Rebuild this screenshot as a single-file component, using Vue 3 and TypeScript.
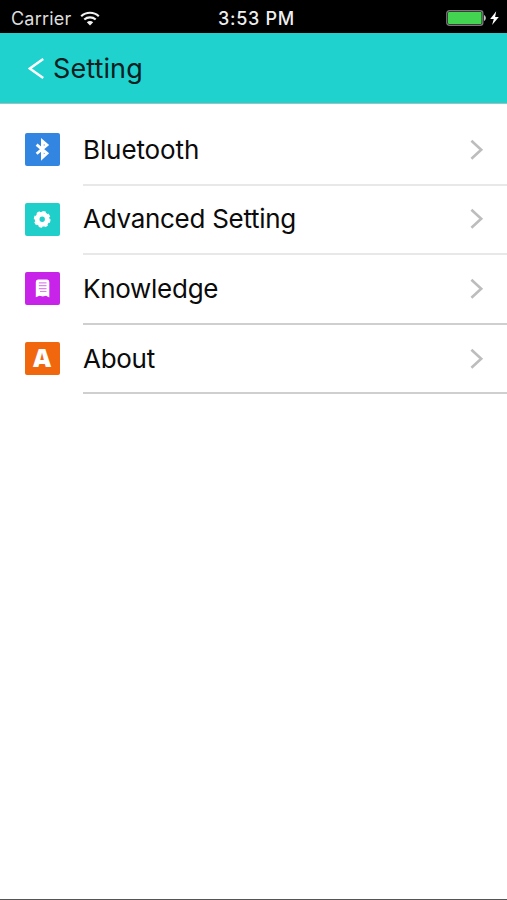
<script setup lang="ts">
type IconName = 'bluetooth' | 'gear' | 'book' | 'letter'

interface SettingItem {
  label: string
  icon: IconName
}

const items: SettingItem[] = [
  { label: 'Bluetooth', icon: 'bluetooth' },
  { label: 'Advanced Setting', icon: 'gear' },
  { label: 'Knowledge', icon: 'book' },
  { label: 'About', icon: 'letter' },
]
</script>

<template>
  <div class="screen">
    <div class="status">
      <div class="status-left">
        <span class="carrier">Carrier</span>
        <svg class="wifi" width="20" height="15" viewBox="0 0 20 15">
          <path d="M1.2 5.2C6.2.6 13.8.6 18.8 5.2" />
          <path d="M4.3 8.5C7.6 5.6 12.4 5.6 15.7 8.5" />
          <path class="dot" d="M6.8 11.2C8.6 9.6 11.4 9.6 13.2 11.2L10 14.5Z" />
        </svg>
      </div>
      <span class="time">3:53 PM</span>
      <div class="status-right">
        <svg width="54" height="18" viewBox="0 0 54 18">
          <rect x="0.8" y="1.8" width="36" height="14.4" rx="2.5" fill="#000" stroke="#777" stroke-width="1.4" />
          <rect x="2" y="3" width="33.6" height="12" rx="1" fill="#43d551" />
          <path d="M38.1 6C40.3 6.7 40.3 11.3 38.1 12Z" fill="#ddd" />
          <path d="M50.2 2.2L44.2 10.1H47.8L46.1 16L52.8 7.9H49.1Z" fill="#fff" />
        </svg>
      </div>
    </div>

    <header class="nav">
      <svg class="back" width="18" height="24" viewBox="0 0 18 24">
        <path d="M15.2 3L1.8 12.5L15.2 22" />
      </svg>
      <h1 class="title">Setting</h1>
    </header>

    <ul class="list">
      <li v-for="item in items" :key="item.label" class="row">
        <span class="tile" :class="item.icon">
          <svg v-if="item.icon === 'bluetooth'" width="35" height="33" viewBox="0 0 35 33">
            <path class="line" d="M11.6 11.6L22 20.4L17.4 24.6V8L22 12L11.6 20.8" />
          </svg>
          <svg v-else-if="item.icon === 'gear'" width="35" height="33" viewBox="0 0 35 33">
            <circle cx="17.2" cy="16.3" r="5.1" class="ring" />
            <circle cx="17.2" cy="16.3" r="7.4" class="teeth" />
          </svg>
          <svg v-else-if="item.icon === 'book'" width="35" height="33" viewBox="0 0 35 33">
            <path class="solid" d="M13 7.5H22.3Q24.3 7.5 24.3 10V25.4L21 23.8L17.8 24.6L14.5 23.8L10.8 25.2V10Q10.8 7.5 13 7.5Z" />
            <path class="text-lines" d="M13.8 10.8H21.5M13.8 13.7H21.5M13.8 16.6H21.5M15 19.5H21.5" />
          </svg>
          <span v-else class="glyph">A</span>
        </span>
        <div class="content">
          <span class="label">{{ item.label }}</span>
          <svg class="chevron" width="14" height="22" viewBox="0 0 14 22">
            <path d="M1.4 1.8L11.2 10.8L1.4 19.8" />
          </svg>
        </div>
      </li>
    </ul>
  </div>
</template>

<style>
body {
  margin: 0;
  background: #fff;
}
</style>

<style scoped>
.screen {
  box-sizing: border-box;
  height: 900px;
  overflow: hidden;
  background: #fff;
  border-bottom: 1px solid #555;
  color: #0b0b0b;
  font-family: Inter, 'Liberation Sans', sans-serif;
}

.status {
  display: grid;
  grid-template-columns: 1fr auto 1fr;
  align-items: center;
  box-sizing: border-box;
  height: 33px;
  padding: 3px 7px 0 11px;
  background: #000;
  color: #ddd;
  font-size: 18px;
}

.status-left {
  display: flex;
  align-items: center;
  gap: 9px;
}

.carrier {
  letter-spacing: 0.2px;
}

.wifi path {
  fill: none;
  stroke: #f2f2f2;
  stroke-width: 2.2;
}

.wifi .dot {
  fill: #f2f2f2;
  stroke: none;
}

.time {
  margin-left: 2px;
  color: #eee;
  font-weight: 500;
  letter-spacing: 0.7px;
}

.status-right {
  display: flex;
  justify-content: flex-end;
}

.nav {
  display: flex;
  align-items: center;
  gap: 7px;
  box-sizing: border-box;
  height: 71px;
  padding-left: 28px;
  background: #20d2ce;
  border-bottom: 1px solid #a4bfbf;
}

.back path {
  fill: none;
  stroke: #fff;
  stroke-width: 2.5;
}

.title {
  margin: 0;
  padding-top: 1px;
  color: #04201f;
  font-size: 27px;
  font-weight: 400;
  letter-spacing: 0.1px;
}

.list {
  margin: 0;
  padding: 12px 0 0;
  list-style: none;
}

.row {
  display: flex;
  align-items: center;
  height: 69.6px;
  padding-left: 24.5px;
}

.tile {
  display: flex;
  align-items: center;
  justify-content: center;
  width: 35px;
  height: 33px;
  margin-top: -2px;
  border-radius: 2px;
  color: #fff;
}

.glyph {
  padding-bottom: 2px;
  font-family: 'Open Sans', sans-serif;
  font-size: 25px;
  font-weight: 800;
  line-height: 29px;
}

.bluetooth { background: #3385e2; }
.gear { background: #20cfca; }
.book { background: #c823e8; }
.letter { background: #f1670e; }

.line {
  fill: none;
  stroke: #fff;
  stroke-width: 2.8;
}

.ring {
  fill: none;
  stroke: #fff;
  stroke-width: 4.8;
}

.teeth {
  fill: none;
  stroke: #fff;
  stroke-width: 2;
  stroke-dasharray: 3.3 2.51;
}

.solid { fill: #fff; }

.text-lines {
  stroke: #d985ed;
  stroke-width: 1.2;
}

.content {
  display: flex;
  flex: 1;
  align-items: center;
  justify-content: space-between;
  box-sizing: border-box;
  height: 100%;
  margin-left: 23.5px;
  padding: 0 23.5px 0 0;
  border-bottom: 2px solid #cfcfcf;
}

.row:nth-child(-n + 2) .content {
  border-bottom: 2px solid #e8e8e8;
}

.label {
  font-size: 26px;
  line-height: 32px;
  letter-spacing: -0.28px;
}

.row:first-child .label {
  letter-spacing: -0.1px;
}

.chevron path {
  fill: none;
  stroke: #bdbdbd;
  stroke-width: 2.6;
}
</style>
